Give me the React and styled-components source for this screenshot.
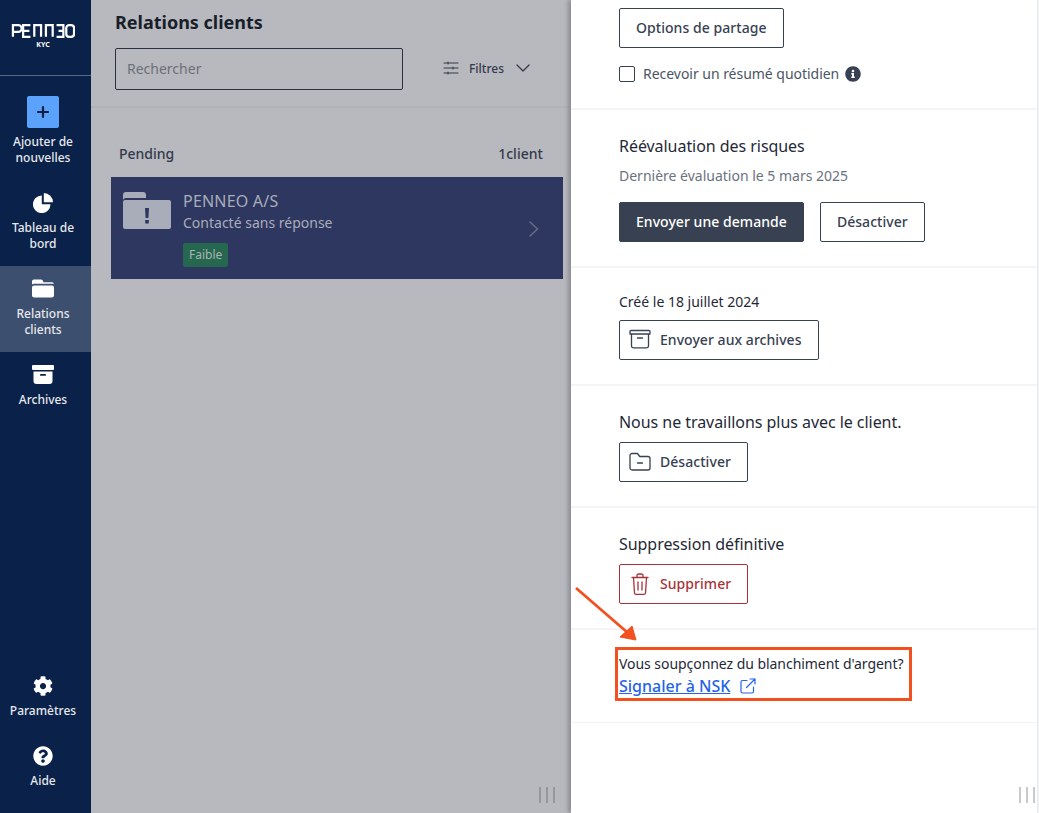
import React from "react";
import styled, { createGlobalStyle } from "styled-components";
import { FaCog, FaQuestionCircle, FaInfoCircle } from "react-icons/fa";

const Global = createGlobalStyle`
  html, body { margin: 0; padding: 0; height: 100%; overflow: hidden; }
  body { font-family: "Noto Sans", sans-serif; background: #fff; }
  * { box-sizing: border-box; }
  #root { height: 100%; }
`;

const Page = styled.div`
  position: relative;
  display: flex;
  width: 1039px;
  height: 813px;
  overflow: hidden;
`;

const Sidebar = styled.nav`
  width: 91px;
  flex: none;
  display: flex;
  flex-direction: column;
  background: #0a2149;
  color: #e6e8ec;
`;

const LogoBlock = styled.div`
  height: 76px;
  flex: none;
  margin-bottom: 8px;
  border-bottom: 1px solid #5a6a85;
  display: flex;
  flex-direction: column;
  align-items: center;
  padding: 23px 5px 0 0;
`;

const KycLabel = styled.span`
  font-size: 7px;
  line-height: 9px;
  margin-top: 2px;
  font-weight: 700;
  color: #fff;
`;

const NavItem = styled.a`
  display: flex;
  flex-direction: column;
  align-items: center;
  gap: ${(p) => (p.$tight ? 6 : 7)}px;
  padding: 12px 5px 14px 0;
  background: ${(p) => (p.$active ? "#3d4f6e" : "transparent")};
`;

const NavIcon = styled.span`
  display: flex;
  align-items: center;
  justify-content: center;
  width: 22px;
  height: 21px;
  color: #fff;
`;

const NavLabel = styled.span`
  font-size: 12px;
  line-height: 16px;
  font-weight: 500;
  text-align: center;
  white-space: pre-line;
`;

const AddBox = styled.span`
  width: 32px;
  height: 32px;
  border-radius: 2px;
  background: #5aa2fb;
  display: flex;
  align-items: center;
  justify-content: center;
`;

const BottomNav = styled.div`
  margin-top: auto;
  padding-bottom: 10px;
`;

const ListPane = styled.main`
  position: relative;
  width: 480px;
  flex: none;
  background: #b8b9be;
  display: flex;
  flex-direction: column;
`;

const ListHead = styled.header`
  height: 108px;
  flex: none;
  padding: 10px 24px 0;
  border-bottom: 2px solid #b1b2b7;
`;

const Title = styled.h1`
  margin: 0 0 13px;
  font-size: 18px;
  line-height: 25px;
  font-weight: 700;
  color: #191e2b;
`;

const SearchRow = styled.div`
  display: flex;
  align-items: center;
`;

const SearchBox = styled.div`
  width: 288px;
  height: 42px;
  padding: 0 11px 2px;
  display: flex;
  align-items: center;
  border: 1px solid #2b3140;
  border-radius: 2px;
  font-size: 14px;
  color: #6c7079;
`;

const Filters = styled.div`
  display: flex;
  align-items: center;
  margin-left: 40px;
  padding-bottom: 2px;
  font-size: 12px;
  font-weight: 500;
  color: #333a4b;
`;

const FiltersLabel = styled.span`
  margin: 0 11px 0 10px;
`;

const GroupRow = styled.div`
  display: flex;
  justify-content: space-between;
  padding: 37px 28px 14px;
  font-size: 14px;
  line-height: 18px;
  font-weight: 500;
  color: #333a4b;
`;

const ClientCount = styled.span`
  letter-spacing: 0.03px;
`;

const Card = styled.div`
  display: flex;
  height: 102px;
  margin: 0 8px 0 20px;
  padding: 14px 22px 0 12px;
  background: #2e3760;
  color: #a9adb9;
`;

const CardBody = styled.div`
  flex: 1;
  margin-left: 12px;
`;

const CardName = styled.div`
  font-size: 16px;
  line-height: 21px;
  letter-spacing: 0.2px;
`;

const CardStatus = styled.div`
  font-size: 14px;
  line-height: 20px;
  margin-top: 1px;
`;

const Badge = styled.span`
  display: inline-block;
  margin-top: 10px;
  padding: 0 6px;
  height: 24px;
  border-radius: 2px;
  font-size: 12px;
  line-height: 24px;
  background: #25674f;
  color: #a9b4b4;
`;

const Chevron = styled.span`
  display: flex;
  align-items: center;
  height: 76px;
  color: #6b7088;
`;

const Grip = styled.div`
  position: absolute;
  right: ${(p) => p.$right}px;
  bottom: 10px;
  width: 16px;
  height: 16px;
  display: flex;
  justify-content: space-between;
  pointer-events: none;
`;

const GripBar = styled.i`
  width: 2px;
  height: 16px;
  background: ${(p) => p.$color};
`;

const Panel = styled.aside`
  position: relative;
  width: 466px;
  flex: none;
  background: #fff;
  box-shadow: -3px 0 4px rgba(90, 92, 100, 0.45);
`;

const EdgeStrip = styled.div`
  width: 2px;
  flex: none;
  background: #f0f1f3;
`;

const Section = styled.section`
  height: ${(p) => p.$h}px;
  padding: ${(p) => p.$pt}px 48px 0;
  border-bottom: ${(p) => p.$bw ?? 2}px solid #f3f4f6;
`;

const Heading = styled.div`
  font-size: 16px;
  line-height: 22px;
  letter-spacing: -0.05px;
  color: #1f2937;
  margin-bottom: ${(p) => p.$mb ?? 9}px;
`;

const SubText = styled.div`
  font-size: 14px;
  line-height: 20px;
  color: #6b7280;
  margin-bottom: 16px;
`;

const SmallText = styled.div`
  font-size: 14px;
  line-height: 20px;
  color: #1f2937;
  margin-bottom: 8px;
`;

const ButtonRow = styled.div`
  display: flex;
  gap: 16px;
`;

const Button = styled.button`
  height: 40px;
  padding: 0 16px 0 ${(p) => (p.$icon ? 9 : 16)}px;
  display: inline-flex;
  align-items: center;
  gap: 9px;
  border-radius: 2px;
  border: 1px solid ${(p) => (p.$danger ? "#a8343a" : "#374151")};
  background: ${(p) => (p.$primary ? "#374151" : "#fff")};
  color: ${(p) => (p.$primary ? "#fff" : p.$danger ? "#a8343a" : "#374151")};
  font: 500 14px/20px "Noto Sans", sans-serif;
  letter-spacing: 0.05px;
`;

const CheckRow = styled.label`
  display: flex;
  align-items: center;
  margin-top: 16px;
  font-size: 14px;
  line-height: 20px;
  letter-spacing: -0.03px;
  color: #4b5563;
`;

const CheckBox = styled.span`
  width: 16px;
  height: 16px;
  margin-right: 8px;
  border: 1px solid #374151;
  border-radius: 2px;
`;

const InfoIcon = styled.span`
  display: flex;
  margin-left: 6px;
  color: #374151;
`;

const Report = styled.div`
  font-size: 14px;
  line-height: 21px;
  letter-spacing: -0.05px;
  color: #1f2937;
`;

const ReportLink = styled.a`
  display: flex;
  align-items: center;
  gap: 10px;
  font-size: 16px;
  line-height: 24px;
  font-weight: 500;
  color: #2563eb;
`;

const LinkText = styled.span`
  text-decoration: underline;
`;

const Highlight = styled.div`
  position: absolute;
  left: 615px;
  top: 647px;
  width: 297px;
  height: 54px;
  border: 3px solid #f2501e;
  pointer-events: none;
`;

const ArrowMark = styled.svg`
  position: absolute;
  left: 570px;
  top: 582px;
  pointer-events: none;
`;

const PenneoLogo = () => (
  <svg width="64" height="15" viewBox="0 0 66 15" fill="none" stroke="#fff" strokeWidth="2.300">
    <path d="M2 14V2h5.500a3 3 0 0 1 0 7H2" />
    <path d="M20 2h-7.500v12H20M12.500 8H19" />
    <path d="M24 14V2h7v12" />
    <path d="M36 14V2h7v12" />
    <path d="M47 2h7v12h-7M49 8h5" />
    <path d="M60 2h2a3 3 0 0 1 3 3v6a3 3 0 0 1-3 3h-2a3 3 0 0 1-3-3V5a3 3 0 0 1 3-3z" />
  </svg>
);

const SolidFolder = () => (
  <svg width="22" height="19" viewBox="0 0 22 19" fill="#fff">
    <path d="M0 4V2.500A2 2 0 0 1 2 .5h7a2 2 0 0 1 2 1.500l.4 1.300H20a2 2 0 0 1 2 1.500H2a3 3 0 0 0-2 .7z" />
    <path d="M2 6.500h18a2 2 0 0 1 2 2V16a2.500 2.500 0 0 1-2.500 2.500h-17A2.500 2.500 0 0 1 0 16V8.500a2 2 0 0 1 2-2z" />
  </svg>
);

const SolidArchive = () => (
  <svg width="22" height="19" viewBox="0 0 22 19">
    <path fill="#fff" d="M1 0h20a1 1 0 0 1 1 1v3a1 1 0 0 1-1 1H1a1 1 0 0 1-1-1V1a1 1 0 0 1 1-1z" />
    <path fill="#fff" d="M1.500 6.500h19V16a3 3 0 0 1-3 3h-13a3 3 0 0 1-3-3z" />
    <rect x="8" y="9" width="6" height="1.800" rx=".9" fill="#0a2149" />
  </svg>
);

const SolidPie = () => (
  <svg width="20" height="20" viewBox="0 0 20 20" fill="#fff">
    <path d="M8.800 2.500V11.200H17.500A8.800 8.800 0 1 1 8.800 2.500z" />
    <path d="M10.800 0A9.200 9.200 0 0 1 20 9.200H10.800z" />
  </svg>
);

const PlainLine = ({ d, w = 22, h = 22, vb = "0 0 22 22", color = "currentColor", sw = 1.300 }) => (
  <svg width={w} height={h} viewBox={vb} fill="none" stroke={color} strokeWidth={sw} strokeLinecap="round" strokeLinejoin="round">
    <path d={d} />
  </svg>
);

const Arrow = () => (
  <ArrowMark width="80" height="70" viewBox="0 0 80 70">
    <path d="M6 6 L58 51" stroke="#f2501e" strokeWidth="2.800" fill="none" />
    <path d="M66 58 L50 55 L62 44 Z" fill="#f2501e" stroke="#f2501e" strokeWidth="1" />
  </ArrowMark>
);

const Nav = ({ icon, label, active }) => (
  <NavItem $active={active}>
    <NavIcon>{icon}</NavIcon>
    <NavLabel>{label}</NavLabel>
  </NavItem>
);

export default function App() {
  return (
    <Page>
      <Global />
      <Sidebar>
        <LogoBlock>
          <PenneoLogo />
          <KycLabel>KYC</KycLabel>
        </LogoBlock>
        <NavItem $tight>
          <AddBox>
            <svg width="14" height="14" viewBox="0 0 14 14" stroke="#0a2149" strokeWidth="2.200" strokeLinecap="round">
              <path d="M7 2v10M2 7h10" />
            </svg>
          </AddBox>
          <NavLabel>{"Ajouter de\nnouvelles"}</NavLabel>
        </NavItem>
        <Nav icon={<SolidPie />} label={"Tableau de\nbord"} />
        <Nav icon={<SolidFolder />} label={"Relations\nclients"} active />
        <Nav icon={<SolidArchive />} label="Archives" />
        <BottomNav>
          <Nav icon={<FaCog size={20} />} label="Paramètres" />
          <Nav icon={<FaQuestionCircle size={20} />} label="Aide" />
        </BottomNav>
      </Sidebar>

      <ListPane>
        <ListHead>
          <Title>Relations clients</Title>
          <SearchRow>
            <SearchBox>Rechercher</SearchBox>
            <Filters>
              <PlainLine w={16} h={16} vb="0 0 16 16" sw={1.100} d="M1 3h14M1 8h14M1 13h14M5 2v2M10 7v2M5 12v2" />
              <FiltersLabel>Filtres</FiltersLabel>
              <PlainLine w={16} h={16} vb="0 0 16 16" d="M2 5l6 6 6-6" />
            </Filters>
          </SearchRow>
        </ListHead>
        <GroupRow>
          <span>Pending</span>
          <ClientCount>1client</ClientCount>
        </GroupRow>
        <Card>
          <svg width="48" height="40" viewBox="0 0 48 40" fill="#a9adb9">
            <path d="M0 9V4a3 3 0 0 1 3-3h17a3 3 0 0 1 3 3v3H3a3 3 0 0 0-3 2z" />
            <path d="M2 9h44a2 2 0 0 1 2 2v25a2 2 0 0 1-2 2H2a2 2 0 0 1-2-2V11a2 2 0 0 1 2-2z" />
            <path d="M22 17h4l-.6 10h-2.800zM22.200 29h3.600v3.500h-3.600z" fill="#2e3760" />
          </svg>
          <CardBody>
            <CardName>PENNEO A/S</CardName>
            <CardStatus>Contacté sans réponse</CardStatus>
            <Badge>Faible</Badge>
          </CardBody>
          <Chevron>
            <PlainLine w={14} h={18} vb="0 0 14 18" d="M3 2l7.500 7L3 16" />
          </Chevron>
        </Card>
        <Grip $right={16}>
          <GripBar $color="#96979c" /><GripBar $color="#96979c" /><GripBar $color="#96979c" />
        </Grip>
      </ListPane>

      <Panel>
        <Section $h={110} $pt={8}>
          <Button>Options de partage</Button>
          <CheckRow>
            <CheckBox />
            Recevoir un résumé quotidien
            <InfoIcon><FaInfoCircle size={16} /></InfoIcon>
          </CheckRow>
        </Section>
        <Section $h={158} $pt={25}>
          <Heading $mb={9}>Réévaluation des risques</Heading>
          <SubText>Dernière évaluation le 5 mars 2025</SubText>
          <ButtonRow>
            <Button $primary>Envoyer une demande</Button>
            <Button>Désactiver</Button>
          </ButtonRow>
        </Section>
        <Section $h={118} $pt={24}>
          <SmallText>Créé le 18 juillet 2024</SmallText>
          <Button $icon>
            <PlainLine d="M1 2.500a1 1 0 0 1 1-1h18a1 1 0 0 1 1 1v2.500H1zM2.500 5v12a1.800 1.800 0 0 0 1.800 1.800h13.400a1.800 1.800 0 0 0 1.800-1.800V5M8.500 9h5" />
            Envoyer aux archives
          </Button>
        </Section>
        <Section $h={122} $pt={25}>
          <Heading>Nous ne travaillons plus avec le client.</Heading>
          <Button $icon>
            <PlainLine d="M1 4.500a2 2 0 0 1 2-2h5.500l2.200 3H19a2 2 0 0 1 2 2V17a2 2 0 0 1-2 2H3a2 2 0 0 1-2-2zM8.500 12h5" />
            Désactiver
          </Button>
        </Section>
        <Section $h={122} $pt={25}>
          <Heading>Suppression définitive</Heading>
          <Button $icon $danger>
            <PlainLine d="M3 4.500h16M8 4.500V2.500A1.500 1.500 0 0 1 9.500 1h3A1.500 1.500 0 0 1 14 2.500v2M4.500 4.500l1 15.500A1.500 1.500 0 0 0 7 21.300h8a1.500 1.500 0 0 0 1.500-1.300l1-15.500M9 9v8M13 9v8" />
            Supprimer
          </Button>
        </Section>
        <Section $h={93} $pt={23} $bw={1}>
          <Report>Vous soupçonnez du blanchiment d'argent?</Report>
          <ReportLink>
            <LinkText>Signaler à NSK</LinkText>
            <PlainLine w={16} h={16} vb="0 0 16 16" sw={1.200} d="M7 2.500H2.500A1.500 1.500 0 0 0 1 4v9.500A1.500 1.500 0 0 0 2.500 15H12a1.500 1.500 0 0 0 1.500-1.500V9M6.500 9.500L15 1M10 1h5v5" />
          </ReportLink>
        </Section>
        <Grip $right={2}>
          <GripBar $color="#c9cacc" /><GripBar $color="#c9cacc" /><GripBar $color="#c9cacc" />
        </Grip>
      </Panel>
      <EdgeStrip />
      <Highlight />
      <Arrow />
    </Page>
  );
}
